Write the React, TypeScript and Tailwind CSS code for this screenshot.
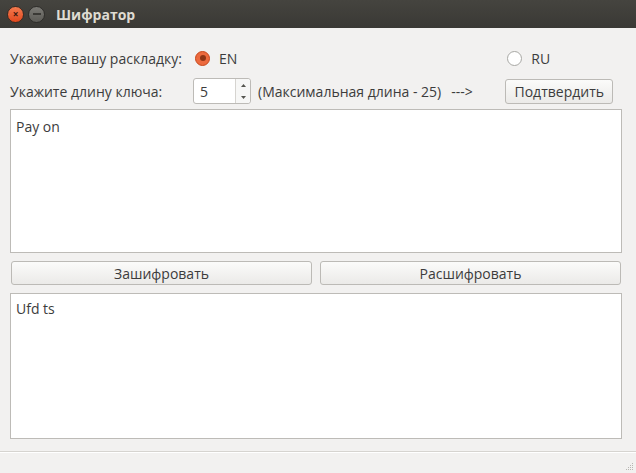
import React, { useState } from 'react';

const font = { fontFamily: '"Open Sans", "DejaVu Sans", sans-serif' };

const Radio: React.FC<{ checked: boolean; label: string; onClick: () => void }> = ({
  checked,
  label,
  onClick,
}) => (
  <button type="button" onClick={onClick} className="flex items-center gap-[9px]">
    {checked ? (
      <span className="w-[15px] h-[15px] rounded-full bg-[#ec6a3e] border border-[#c8471a] flex items-center justify-center">
        <span className="w-[6px] h-[6px] rounded-full bg-[#8e3616]" />
      </span>
    ) : (
      <span className="w-[15px] h-[15px] rounded-full bg-white border border-[#a8a8a4]" />
    )}
    <span>{label}</span>
  </button>
);

const App: React.FC = () => {
  const [layout, setLayout] = useState<'EN' | 'RU'>('EN');
  const [len, setLen] = useState(5);
  const [input, setInput] = useState('Pay on');
  const [output, setOutput] = useState('Ufd ts');

  return (
    <div
      className="w-[636px] h-[473px] flex flex-col bg-[#f2f1f0] text-[#3c3c3c] text-[14px] overflow-hidden"
      style={font}
    >
      {/* title bar */}
      <div className="h-[28px] flex items-center bg-gradient-to-b from-[#45443f] to-[#3a3935] px-[7px] gap-[4px]">
        <span className="w-[17px] h-[17px] rounded-full bg-gradient-to-b from-[#f37a4e] to-[#e2471b] border border-[#3a2a22] flex items-center justify-center text-[#3a1a10] text-[10px] leading-none font-bold">
          ×
        </span>
        <span className="w-[17px] h-[17px] rounded-full bg-gradient-to-b from-[#7b7a75] to-[#5c5b56] border border-[#2e2d2a] flex items-center justify-center">
          <span className="w-[8px] h-[2px] bg-[#3a3935]" />
        </span>
        <span className="ml-[7px] text-[#dfdbd2] font-bold text-[14px]">Шифратор</span>
      </div>

      <div className="flex-1 flex flex-col px-[10px] pt-[20px]">
        {/* layout row */}
        <div className="h-[20px] flex items-center">
          <span className="w-[185px]">Укажите вашу раскладку:</span>
          <Radio checked={layout === 'EN'} label="EN" onClick={() => setLayout('EN')} />
          <span className="ml-[270px]">
            <Radio checked={layout === 'RU'} label="RU" onClick={() => setLayout('RU')} />
          </span>
        </div>

        {/* key length row */}
        <div className="h-[26px] mt-[10px] flex items-center">
          <span className="w-[183px]">Укажите длину ключа:</span>
          <div className="w-[58px] h-[26px] flex bg-white border border-[#bdbbb7] rounded-[3px]">
            <span className="flex-1 pl-[6px] flex items-center">{len}</span>
            <div className="w-[15px] flex flex-col border-l border-[#d6d4d0] bg-[#f7f7f6] rounded-r-[3px] text-[#55554f]">
              <button
                type="button"
                onClick={() => setLen(Math.min(25, len + 1))}
                className="flex-1 flex items-center justify-center"
              >
                <svg width="5" height="3" viewBox="0 0 5 3">
                  <path d="M0 3 L2.5 0 L5 3 Z" fill="currentColor" />
                </svg>
              </button>
              <button
                type="button"
                onClick={() => setLen(Math.max(1, len - 1))}
                className="flex-1 flex items-center justify-center"
              >
                <svg width="5" height="3" viewBox="0 0 5 3">
                  <path d="M0 0 L2.5 3 L5 0 Z" fill="currentColor" />
                </svg>
              </button>
            </div>
          </div>
          <span className="ml-[7px]">(Максимальная длина - 25)</span>
          <span className="ml-[10px]">---&gt;</span>
          <button
            type="button"
            className="ml-auto mr-[13px] h-[25px] px-[8px] bg-gradient-to-b from-[#fbfbfa] to-[#ebeae8] border border-[#bcbab6] rounded-[3px]"
          >
            Подтвердить
          </button>
        </div>

        <textarea
          value={input}
          onChange={(e) => setInput(e.target.value)}
          className="mt-[5px] w-[612px] h-[144px] resize-none bg-white border border-[#bdbbb7] px-[5px] py-[6px] outline-none"
        />

        <div className="mt-[8px] flex gap-[8px] pl-[1px] pr-[1px] w-[612px]">
          <button
            type="button"
            className="flex-1 h-[24px] bg-gradient-to-b from-[#fbfbfa] to-[#ebeae8] border border-[#bcbab6] rounded-[3px]"
          >
            Зашифровать
          </button>
          <button
            type="button"
            className="flex-1 h-[24px] bg-gradient-to-b from-[#fbfbfa] to-[#ebeae8] border border-[#bcbab6] rounded-[3px]"
          >
            Расшифровать
          </button>
        </div>

        <textarea
          value={output}
          onChange={(e) => setOutput(e.target.value)}
          className="mt-[8px] w-[612px] h-[146px] resize-none bg-white border border-[#bdbbb7] px-[5px] py-[4px] outline-none"
        />
      </div>

      {/* status bar */}
      <div className="h-[22px] border-t border-[#d6d4d0] shadow-[inset_0_1px_0_#ffffff] flex justify-end items-end pr-[2px] pb-[2px]">
        <svg width="10" height="10" viewBox="0 0 10 10">
          {[
            [8, 2],
            [6, 4],
            [8, 4],
            [4, 6],
            [6, 6],
            [8, 6],
            [2, 8],
            [4, 8],
            [6, 8],
            [8, 8],
          ].map(([x, y]) => (
            <rect key={`${x}-${y}`} x={x} y={y} width="1" height="1" fill="#b8b6b2" />
          ))}
        </svg>
      </div>
    </div>
  );
};

export default App;
